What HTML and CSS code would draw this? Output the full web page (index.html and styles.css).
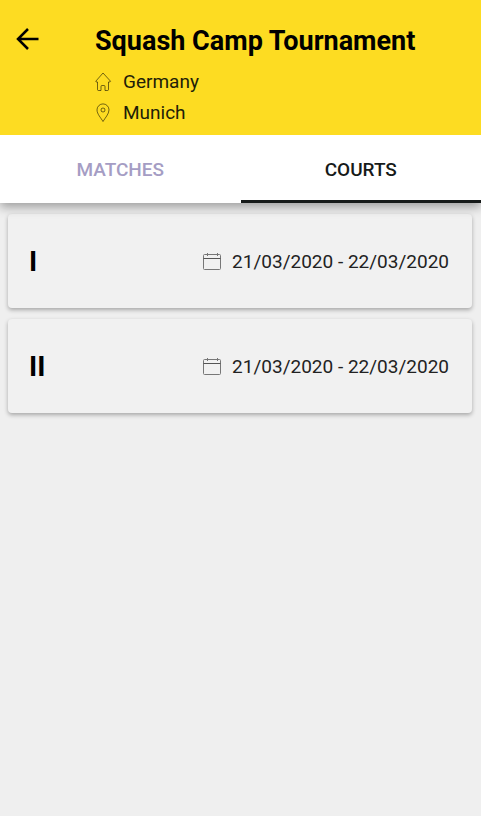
FILE: index.html
```html
<!DOCTYPE html>
<html lang="en">
<head>
<meta charset="utf-8">
<meta name="viewport" content="width=device-width, initial-scale=1">
<title>Squash Camp Tournament</title>
<link rel="stylesheet" href="styles.css">
</head>
<body>
<header class="header">
  <button class="back" type="button" aria-label="Back">
    <svg width="24" height="24" viewBox="0 0 24 24" fill="none" stroke="#000" stroke-width="2.5"><path d="M23.500 12H3M13 2 3 12l10 10"/></svg>
  </button>
  <div class="heading">
    <h1 class="title">Squash Camp Tournament</h1>
    <p class="place">
      <svg width="18" height="20" viewBox="0 0 18 20" fill="none" stroke="#000" stroke-opacity=".55" stroke-linejoin="round"><path d="M8 1 .8 9.200Q.5 10.200 2.500 10V17.500Q2.500 18.500 3.500 18.500H6V14.500Q6 13.500 7 13.500H9Q10 13.500 10 14.500V18.500H12.500Q13.500 18.500 13.500 17.500V10Q15.700 10.200 15.500 9.200Z"/></svg>
      <span>Germany</span>
    </p>
    <p class="place">
      <svg width="18" height="20" viewBox="0 0 18 20" fill="none" stroke="#000" stroke-opacity=".55"><path d="M8 18.500C6 15 2 11 2 6.900A6 6 0 0 1 14 6.900C14 11 10 15 8 18.500Z"/><circle cx="8" cy="7" r="2"/></svg>
      <span>Munich</span>
    </p>
  </div>
</header>
<nav class="tabs">
  <a class="tab" href="#matches">MATCHES</a>
  <a class="tab active" href="#courts" aria-current="page">COURTS</a>
</nav>
<main class="courts" id="courts">
  <article class="card">
    <h2 class="court">I</h2>
    <div class="dates">
      <svg width="20" height="20" viewBox="0 0 20 20" fill="none" stroke="#777"><rect x="1.500" y="2.500" width="17" height="15" rx="1"/><path d="M1.500 6.500h17" stroke="#555"/><path d="M5.500 1v3M15.500 1v3"/></svg>
      <span>21/03/2020 - 22/03/2020</span>
    </div>
  </article>
  <article class="card">
    <h2 class="court">II</h2>
    <div class="dates">
      <svg width="20" height="20" viewBox="0 0 20 20" fill="none" stroke="#777"><rect x="1.500" y="2.500" width="17" height="15" rx="1"/><path d="M1.500 6.500h17" stroke="#555"/><path d="M5.500 1v3M15.500 1v3"/></svg>
      <span>21/03/2020 - 22/03/2020</span>
    </div>
  </article>
</main>
</body>
</html>
```
FILE: styles.css
```css
* {
  box-sizing: border-box;
}

body {
  margin: 0;
  background: #efefef;
  color: #000;
  font-family: Roboto, sans-serif;
}

h1,
h2,
p {
  margin: 0;
}

svg {
  display: block;
  flex: none;
}

.header {
  position: relative;
  z-index: 2;
  display: flex;
  align-items: flex-start;
  gap: 56px;
  padding: 21px 15px 7px;
  background: #fddc22;
}

.back {
  padding: 6px 0;
  border: 0;
  background: none;
}

.heading {
  min-width: 0;
}

.title {
  margin-bottom: 5px;
  font-size: 27px;
  font-weight: 700;
  line-height: 40px;
}

.place {
  display: flex;
  align-items: center;
  gap: 10px;
  font-size: 19px;
  line-height: 31px;
  color: #221e08;
}

.tabs {
  position: relative;
  z-index: 1;
  display: flex;
  background: #fff;
  box-shadow: 0 4px 10px rgba(0, 0, 0, 0.35);
}

.tab {
  flex: 1;
  padding: 5px 0 0;
  border-bottom: 3px solid transparent;
  color: #a59dc4;
  font-size: 19px;
  font-weight: 500;
  line-height: 60px;
  text-align: center;
  text-decoration: none;
}

.active {
  border-bottom-color: #161a19;
  color: #161a19;
}

.courts {
  display: grid;
  gap: 11px;
  padding: 11px 9px 11px 8px;
}

.card {
  display: flex;
  align-items: center;
  justify-content: space-between;
  padding: 28px 23px 26px 21px;
  border-radius: 4px;
  background: #f1f1f1;
  box-shadow: 0 2px 4px rgba(0, 0, 0, 0.3);
}

.court {
  font-size: 28px;
  font-weight: 700;
  line-height: 40px;
}

.dates {
  display: flex;
  align-items: center;
  gap: 10px;
  color: #222;
  font-size: 19px;
  line-height: 40px;
}
```
